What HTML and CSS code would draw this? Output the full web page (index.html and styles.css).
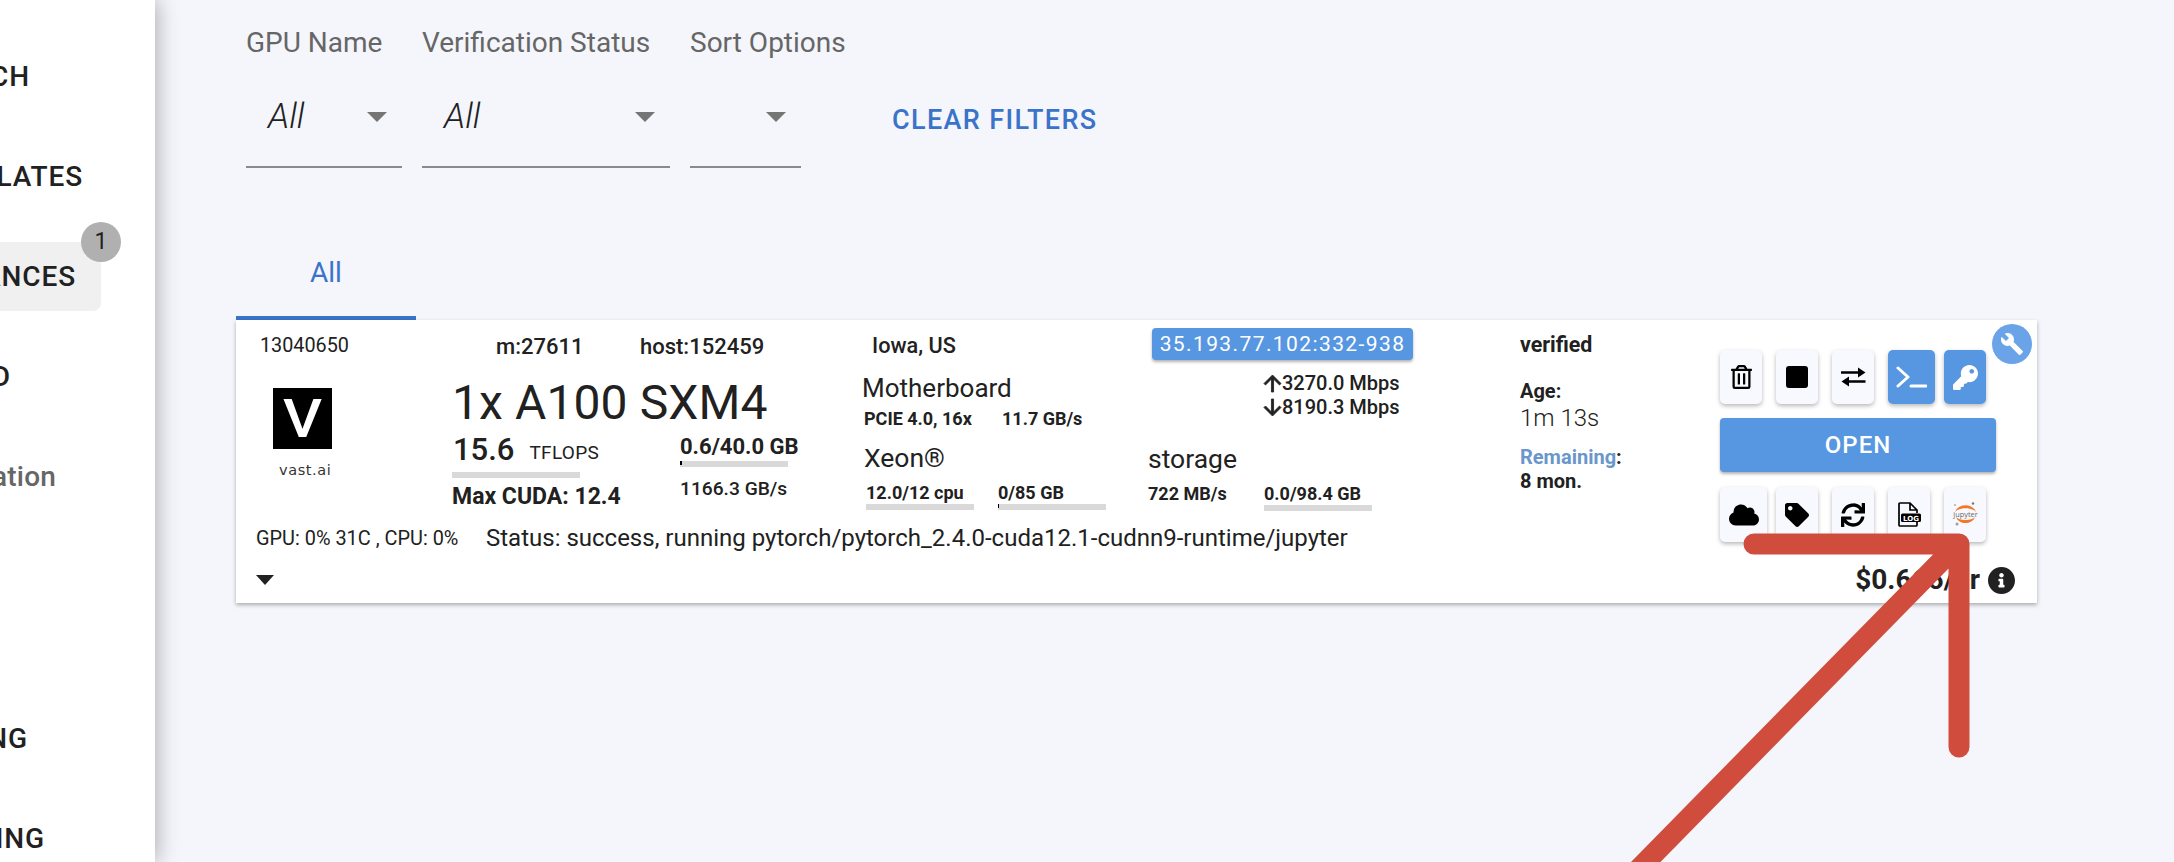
FILE: index.html
```html
<!DOCTYPE html>
<html lang="en">
<head>
<meta charset="utf-8">
<title>Instances</title>
<link rel="stylesheet" href="styles.css">
</head>
<body>
<aside class="sidebar">
  <nav class="nav">
    <div class="nav-item nav-search"><span>SEARCH</span></div>
    <div class="nav-item nav-templates"><span>TEMPLATES</span></div>
    <div class="nav-item nav-active"><span class="pill"><span>INSTANCES</span><span class="badge">1</span></span></div>
    <div class="nav-item nav-cloud"><span>CLOUD</span></div>
    <div class="nav-item nav-doc"><span>Documentation</span></div>
    <div class="nav-item nav-billing"><span>BILLING</span></div>
    <div class="nav-item nav-earning"><span>EARNING</span></div>
  </nav>
</aside>
<main class="main">
  <section class="filters">
    <div class="filter filter-gpu">
      <div class="filter-label">GPU Name</div>
      <div class="select"><span class="select-value">All</span><span class="select-caret"></span></div>
    </div>
    <div class="filter filter-status">
      <div class="filter-label">Verification Status</div>
      <div class="select"><span class="select-value">All</span><span class="select-caret"></span></div>
    </div>
    <div class="filter filter-sort">
      <div class="filter-label">Sort Options</div>
      <div class="select"><span class="select-value"></span><span class="select-caret"></span></div>
    </div>
    <div class="clear">CLEAR FILTERS</div>
  </section>
  <div class="tabs"><div class="tab">All</div></div>
  <article class="card">
    <div class="card-left">
      <div class="card-cols">
        <div class="col col-id">
          <div class="inst-id">13040650</div>
          <div class="logo"><span class="logo-v">V</span></div>
          <div class="logo-name">vast.ai</div>
        </div>
        <div class="col col-gpu">
          <div class="ids"><span class="id-m">m:27611</span><span>host:152459</span></div>
          <div class="gpu-title">1x A100 SXM4</div>
          <div class="gpu-stats">
            <div class="gpu-perf">
              <div class="perf"><span class="perf-num">15.6</span><span class="perf-unit">TFLOPS</span></div>
              <div class="meter meter-wide"></div>
              <div class="cuda">Max CUDA: 12.4</div>
            </div>
            <div class="gpu-mem">
              <div class="mem">0.6/40.0 GB</div>
              <div class="meter"><div class="meter-fill" style="width:2px"></div></div>
              <div class="mem-speed">1166.3 GB/s</div>
            </div>
          </div>
        </div>
        <div class="col col-sys">
          <div class="location">Iowa, US</div>
          <div class="part part-board">Motherboard</div>
          <div class="pcie"><span class="pcie-a">PCIE 4.0, 16x</span><span>11.7 GB/s</span></div>
          <div class="part part-cpu">Xeon®</div>
          <div class="small-row">
            <div class="small-cell small-cpu"><div class="small">12.0/12 cpu</div><div class="meter"></div></div>
            <div class="small-cell"><div class="small">0/85 GB</div><div class="meter"><div class="meter-fill" style="width:1px"></div></div></div>
          </div>
        </div>
        <div class="col col-net">
          <div class="chip">35.193.77.102:332-938</div>
          <div class="speeds">
            <div class="speed"><svg class="arrow" viewBox="4 4 16 16"><path d="M4 12l1.41 1.41L11 7.83V20h2V7.83l5.58 5.59L20 12l-8-8-8 8z"/></svg>3270.0 Mbps</div>
            <div class="speed"><svg class="arrow" viewBox="4 4 16 16"><path d="M20 12l-1.41-1.41L13 16.17V4h-2v12.17l-5.58-5.59L4 12l8 8 8-8z"/></svg>8190.3 Mbps</div>
          </div>
          <div class="part part-storage">storage</div>
          <div class="small-row">
            <div class="small-cell small-disk"><div class="small">722 MB/s</div></div>
            <div class="small-cell"><div class="small">0.0/98.4 GB</div><div class="meter"></div></div>
          </div>
        </div>
        <div class="col col-meta">
          <div class="verified">verified</div>
          <div class="meta-label meta-age">Age:</div>
          <div class="age">1m 13s</div>
          <div class="meta-label meta-rem"><span class="rem">Remaining</span>:</div>
          <div class="meta-label">8 mon.</div>
        </div>
      </div>
      <div class="status-row">
        <div class="usage">GPU: 0% 31C , CPU: 0%</div>
        <div class="status">Status: success, running pytorch/pytorch_2.4.0-cuda12.1-cudnn9-runtime/jupyter</div>
      </div>
      <div class="expand"></div>
    </div>
    <div class="actions">
      <div class="btn-row btn-row-top">
        <div class="btn"><svg class="ic-trash" viewBox="0 0 448 512"><path d="M268 416h24a12 12 0 0 0 12-12V188a12 12 0 0 0-12-12h-24a12 12 0 0 0-12 12v216a12 12 0 0 0 12 12zM432 80h-82.41l-34-56.7A48 48 0 0 0 274.41 0H173.59a48 48 0 0 0-41.16 23.3L98.41 80H16A16 16 0 0 0 0 96v16a16 16 0 0 0 16 16h16v336a48 48 0 0 0 48 48h288a48 48 0 0 0 48-48V128h16a16 16 0 0 0 16-16V96a16 16 0 0 0-16-16zM171.84 50.91A6 6 0 0 1 177 48h94a6 6 0 0 1 5.15 2.91L293.61 80H154.39zM368 464H80V128h288zm-212-48h24a12 12 0 0 0 12-12V188a12 12 0 0 0-12-12h-24a12 12 0 0 0-12 12v216a12 12 0 0 0 12 12z"/></svg></div>
        <div class="btn"><span class="ic-stop"></span></div>
        <div class="btn"><svg class="ic-swap" viewBox="0 0 25 20"><path d="M0 4.3H17V.5L24.5 5.5 17 10.5V6.8H0zM24.5 13.2H8V9.5L.5 14.5 8 19.5V15.7H24.5z"/></svg></div>
        <div class="btn btn-blue btn-wide-r"><svg class="ic-term" viewBox="0 0 31 22"><path d="M2 2l10 9-10 9" fill="none" stroke="#fff" stroke-width="3" stroke-linecap="round" stroke-linejoin="round"/><path d="M15 20h15" fill="none" stroke="#fff" stroke-width="3" stroke-linecap="round"/></svg></div>
        <div class="btn btn-blue"><svg class="ic-key" viewBox="0 0 512 512"><path d="M512 176.001C512 273.203 433.202 352 336 352c-11.22 0-22.19-1.062-32.827-3.069l-24.012 27.014A23.999 23.999 0 0 1 261.223 384H224v40c0 13.255-10.745 24-24 24h-40v40c0 13.255-10.745 24-24 24H24c-13.255 0-24-10.745-24-24v-78.059c0-6.365 2.529-12.47 7.029-16.971l161.802-161.802C163.108 213.814 160 195.271 160 176 160 78.798 238.797.001 335.999 0 433.488-.001 512 78.511 512 176.001zM336 128c0 26.51 21.49 48 48 48s48-21.49 48-48-21.49-48-48-48-48 21.49-48 48z"/></svg></div>
      </div>
      <div class="open">OPEN</div>
      <div class="btn-row btn-row-bottom">
        <div class="btn btn-wide-l"><svg class="ic-cloud" viewBox="0 0 640 512"><path d="M537.6 226.6c4.1-10.7 6.4-22.4 6.4-34.6 0-53-43-96-96-96-19.7 0-38.1 6-53.3 16.2C367 64.2 315.3 32 256 32c-88.4 0-160 71.6-160 160 0 2.7.1 5.4.2 8.1C40.2 219.8 0 273.2 0 336c0 79.5 64.5 144 144 144h368c70.7 0 128-57.3 128-128 0-61.9-44-113.6-102.4-125.4z"/></svg></div>
        <div class="btn"><svg class="ic-tag" viewBox="0 0 512 512"><path d="M0 252.118V48C0 21.49 21.49 0 48 0h204.118a48 48 0 0 1 33.941 14.059l211.882 211.882c18.745 18.745 18.745 49.137 0 67.882L293.823 497.941c-18.745 18.745-49.137 18.745-67.882 0L14.059 286.059A48 48 0 0 1 0 252.118zM112 64c-26.51 0-48 21.49-48 48s21.49 48 48 48 48-21.49 48-48-21.49-48-48-48z"/></svg></div>
        <div class="btn"><svg class="ic-sync" viewBox="0 0 512 512"><path d="M440.65 12.57l4 82.77A247.16 247.16 0 0 0 255.83 8C134.73 8 33.91 94.92 12.29 209.82A12 12 0 0 0 24.09 224h49.05a12 12 0 0 0 11.67-9.26 175.91 175.91 0 0 1 317-56.94l-101.46-4.86a12 12 0 0 0-12.57 12v47.41a12 12 0 0 0 12 12H500a12 12 0 0 0 12-12V12a12 12 0 0 0-12-12h-47.37a12 12 0 0 0-11.98 12.57zM255.83 432a175.61 175.61 0 0 1-146-77.8l101.8 4.87a12 12 0 0 0 12.57-12v-47.4a12 12 0 0 0-12-12H12a12 12 0 0 0-12 12V500a12 12 0 0 0 12 12h47.35a12 12 0 0 0 12-12.6l-4.15-82.57A247.17 247.17 0 0 0 255.83 504c121.11 0 221.93-86.92 243.55-201.82a12 12 0 0 0-11.8-14.18h-49.05a12 12 0 0 0-11.67 9.26A175.86 175.86 0 0 1 255.83 432z"/></svg></div>
        <div class="btn"><svg class="ic-log" viewBox="0 0 23 25"><path d="M19 20v3a1 1 0 0 1-1 1H2a1 1 0 0 1-1-1V2a1 1 0 0 1 1-1h10l7 7v3M12 1v7h7" fill="none" stroke="#000" stroke-width="1.7"/><rect x="3" y="11.5" width="20" height="8.5" rx="1.5"/><text class="log-text" x="13" y="18.5">LOG</text></svg></div>
        <div class="btn"><svg class="ic-jupyter" viewBox="0 0 27 25"><path d="M3 10C6 1 21 1 24 10 20 5 7 5 3 10zM4 15C7 23 20 23 23 15 20 19 7 19 4 15z" fill="#f37726"/><text class="jup-text" x="13.5" y="14.5">jupyter</text><circle cx="21" cy="1.5" r="1.2" fill="#767677"/><circle cx="3" cy="3" r=".8" fill="#767677"/><circle cx="5" cy="22" r="1.5" fill="#9e9e9e"/></svg></div>
      </div>
      <div class="price"><span>$0.666/hr</span><svg class="ic-info" viewBox="8 8 496 496"><path d="M256 8C119.043 8 8 119.083 8 256c0 136.997 111.043 248 248 248s248-111.003 248-248C504 119.083 392.957 8 256 8zm0 110c23.196 0 42 18.804 42 42s-18.804 42-42 42-42-18.804-42-42 18.804-42 42-42zm56 254c0 6.627-5.373 12-12 12h-88c-6.627 0-12-5.373-12-12v-24c0-6.627 5.373-12 12-12h12v-64h-12c-6.627 0-12-5.373-12-12v-24c0-6.627 5.373-12 12-12h64c6.627 0 12 5.373 12 12v100h12c6.627 0 12 5.373 12 12v24z"/></svg></div>
    </div>
    <div class="wrench"><svg class="ic-wrench" viewBox="0 0 24 24"><path d="M22.7 19l-9.1-9.1c.9-2.3.4-5-1.5-6.9-2-2-5-2.4-7.4-1.3L9 6 6 9 1.6 4.7C.4 7.1.9 10.1 2.9 12.1c1.9 1.9 4.6 2.4 6.9 1.5l9.1 9.1c.4.4 1 .4 1.4 0l2.3-2.3c.5-.4.5-1.1.1-1.4z"/></svg></div>
  </article>
</main>
<svg class="annotation" viewBox="0 0 2174 862"><path d="M1754 544H1959V747M1958 544L1630 878" fill="none" stroke="#d04d3d" stroke-width="21" stroke-linecap="round" stroke-linejoin="round"/></svg>
</body>
</html>
```
FILE: styles.css
```css
* { box-sizing: border-box; }
html, body { margin: 0; height: 100%; }
body {
  display: flex;
  height: 862px;
  overflow: hidden;
  position: relative;
  background: #f4f6fb;
  color: #212121;
  font-family: Roboto, "Liberation Sans", sans-serif;
}

/* Sidebar */
.sidebar {
  width: 155px;
  flex: none;
  height: 862px;
  background: #fff;
  box-shadow: 3px 0 20px rgba(0, 0, 0, .28);
  overflow: hidden;
  position: relative;
  z-index: 2;
}
.nav { padding-top: 26px; }
.nav-item {
  height: 100px;
  display: flex;
  align-items: center;
  justify-content: flex-end;
  font-size: 28px;
  font-weight: 500;
  letter-spacing: .9px;
  white-space: nowrap;
  color: #212121;
}
.nav-search { padding-right: 125px; }
.nav-templates { padding-right: 72px; }
.nav-active { padding-right: 54px; }
.nav-cloud { padding-right: 144px; }
.nav-doc { padding-right: 99px; color: #666; letter-spacing: .2px; }
.nav-billing { padding-right: 127px; margin-top: 162px; }
.nav-earning { padding-right: 110px; }
.pill {
  position: relative;
  height: 69px;
  display: flex;
  align-items: center;
  padding-right: 25px;
  background: #f0f0f0;
  border-radius: 0 8px 8px 0;
}
.badge {
  position: absolute;
  top: -20px;
  right: -20px;
  width: 40px;
  height: 40px;
  border-radius: 50%;
  background: #b0b0b0;
  display: flex;
  align-items: center;
  justify-content: center;
  font-size: 23px;
  font-weight: 400;
  letter-spacing: 0;
}

/* Main */
.main { flex: 1; padding-left: 81px; min-width: 0; }
.filters { display: flex; gap: 20px; padding-left: 10px; height: 168px; }
.filter { display: flex; flex-direction: column; padding-top: 27px; }
.filter-gpu { width: 156px; }
.filter-status { width: 248px; }
.filter-sort { width: 111px; }
.filter-label { font-size: 28px; line-height: 32px; color: #666; white-space: nowrap; }
.select {
  margin-top: 36px;
  height: 73px;
  border-bottom: 2px solid #8a8a8a;
  display: flex;
  justify-content: space-between;
  padding: 2px 15px 0 22px;
}
.select-value { font-size: 35px; font-style: italic; font-weight: 300; line-height: 40px; height: 40px; }
.select-caret {
  margin-top: 15px;
  width: 0;
  height: 0;
  border-left: 10px solid transparent;
  border-right: 10px solid transparent;
  border-top: 10px solid #757575;
}
.clear {
  margin: 104px 0 0 71px;
  font-size: 27px;
  line-height: 32px;
  height: 32px;
  font-weight: 500;
  letter-spacing: 1.35px;
  color: #3a73c9;
  white-space: nowrap;
}

.tabs { margin-top: 56px; display: flex; }
.tab {
  width: 180px;
  height: 96px;
  border-bottom: 4px solid #3a73c9;
  padding-top: 4px;
  display: flex;
  align-items: center;
  justify-content: center;
  font-size: 28px;
  color: #3a73c9;
}

/* Card */
.card {
  position: relative;
  width: 1801px;
  height: 283px;
  background: #fff;
  box-shadow: 0 2px 4px rgba(0, 0, 0, .3);
  display: flex;
}
.card-left { width: 1484px; flex: none; }
.card-cols { display: flex; height: 190px; }
.col { flex: none; }
.col-id { width: 216px; padding: 14px 0 0 24px; }
.inst-id { font-size: 19.8px; line-height: 24px; }
.logo {
  width: 59px;
  height: 61px;
  margin: 30px 0 0 13px;
  background: #000;
  color: #fff;
  display: flex;
  align-items: center;
  justify-content: center;
  font-size: 54px;
  font-weight: 500;
}
.logo-v { display: block; transform: scaleX(1.12); }
.logo-name {
  margin: 11px 0 0 19px;
  font: 14.5px/20px "DejaVu Sans", sans-serif;
  letter-spacing: .6px;
  color: #333;
}

.col-gpu { width: 411px; padding-top: 15px; }
.ids { font-size: 22px; line-height: 24px; font-weight: 500; padding-left: 44px; display: flex; }
.id-m { width: 144px; }
.gpu-title { margin-top: 19px; font-size: 48px; line-height: 50px; white-space: nowrap; letter-spacing: .1px; }
.gpu-stats { display: flex; }
.gpu-perf { width: 228px; }
.perf { margin-top: 4px; height: 36px; display: flex; align-items: center; padding-left: 1px; }
.perf-num { font-size: 31px; font-weight: 500; line-height: 36px; }
.perf-unit { font-size: 19px; margin: 6px 0 0 15px; line-height: 24px; letter-spacing: .3px; }
.meter { height: 6px; width: 108px; background: #d9d9d9; display: flex; }
.meter-fill { height: 4px; background: #000; }
.meter-wide { width: 128px; margin-top: 4px; }
.cuda { margin-top: 6px; font-size: 23px; line-height: 26px; font-weight: 700; white-space: nowrap; }
.gpu-mem { padding-top: 6px; }
.mem { font-size: 22px; line-height: 26px; font-weight: 700; white-space: nowrap; }
.gpu-mem .meter { margin-top: 1px; }
.mem-speed { margin-top: 10px; font-size: 19.2px; line-height: 24px; font-weight: 500; white-space: nowrap; }

.col-sys { width: 285px; padding-top: 14px; }
.location { font-size: 21.7px; line-height: 24px; padding-left: 9px; font-weight: 500; }
.part { font-size: 26.5px; line-height: 32px; }
.part-board { margin: 14px 0 0 -1px; font-size: 26px; }
.part-cpu { margin-top: 12px; padding-left: 1px; }
.part-storage { margin-top: 24px; }
.pcie { margin-top: 4px; padding-left: 1px; font-size: 18px; line-height: 22px; font-weight: 700; display: flex; white-space: nowrap; }
.pcie-a { width: 138px; }
.small-row { display: flex; margin-top: 8px; }
.small-cell { width: 116px; }
.small-cpu { width: 132px; margin-left: 3px; }
.small-disk { width: 116px; }
.small { font-size: 18px; line-height: 22px; font-weight: 700; white-space: nowrap; }

.col-net { width: 372px; padding-top: 8px; }
.chip {
  margin-left: 4px;
  width: 261px;
  height: 32px;
  background: #5796e1;
  color: #fff;
  border-radius: 4px;
  box-shadow: 0 2px 3px rgba(0, 0, 0, .3);
  font-size: 21px;
  line-height: 32px;
  letter-spacing: 1.4px;
  text-align: center;
  white-space: nowrap;
}
.speeds { margin: 11px 0 0 116px; }
.speed { height: 24px; display: flex; align-items: center; font-size: 20px; font-weight: 500; white-space: nowrap; }
.arrow { width: 17px; height: 17px; margin-right: 1px; fill: #212121; stroke: #212121; stroke-width: .8; overflow: visible; }

.col-meta { width: 200px; padding-top: 13px; }
.verified { font-size: 21.4px; line-height: 24px; font-weight: 700; }
.meta-label { font-size: 20px; line-height: 24px; font-weight: 700; }
.meta-age { margin-top: 22px; }
.age { font-size: 24px; line-height: 30px; font-weight: 300; }
.meta-rem { margin-top: 12px; }
.rem { color: #6a96cc; }

.status-row { display: flex; align-items: center; margin-top: 14px; height: 28px; padding-left: 20px; }
.usage { width: 230px; font-size: 19.9px; white-space: nowrap; }
.status { font-size: 24px; white-space: nowrap; }
.expand {
  margin: 23px 0 0 20px;
  width: 0;
  height: 0;
  border-left: 9px solid transparent;
  border-right: 9px solid transparent;
  border-top: 10px solid #212121;
}

/* Actions */
.actions { width: 317px; flex: none; padding: 30px 41px 0 0; }
.btn-row { display: flex; gap: 14px; }
.btn-row-top { height: 54px; }
.btn-row-bottom { height: 55px; margin-top: 15px; }
.btn {
  width: 42px;
  height: 100%;
  display: flex;
  align-items: center;
  justify-content: center;
  background: #f8f9fe;
  border-radius: 5px;
  box-shadow: 0 2px 4px rgba(0, 0, 0, .28);
  flex: none;
}
.btn svg { display: block; }
.btn-blue { background: #5796e1; }
.btn-wide-r { width: 47px; margin-right: -5px; }
.btn-wide-l { width: 47px; margin-right: -5px; }
.ic-trash { width: 21px; height: 24px; }
.ic-stop { width: 22px; height: 22px; background: #000; border-radius: 3px; }
.ic-swap { width: 25px; height: 20px; }
.ic-term { width: 31px; height: 22px; }
.ic-key { width: 25px; height: 25px; fill: #fff; }
.ic-cloud { width: 30px; height: 24px; }
.ic-tag { width: 24px; height: 24px; }
.ic-sync { width: 24px; height: 24px; }
.ic-log { width: 23px; height: 25px; }
.log-text { font: 700 7px "DejaVu Sans", sans-serif; fill: #fff; text-anchor: middle; }
.ic-jupyter { width: 27px; height: 25px; }
.jup-text { font: 7.4px "Open Sans", sans-serif; fill: #666; text-anchor: middle; }
.open {
  margin-top: 14px;
  height: 54px;
  background: #5796e1;
  color: #fff;
  border-radius: 4px;
  box-shadow: 0 2px 3px rgba(0, 0, 0, .3);
  font-size: 24px;
  font-weight: 500;
  letter-spacing: 1px;
  line-height: 55px;
  text-align: center;
}
.price {
  margin: 19px -19px 0 0;
  height: 36px;
  display: flex;
  align-items: center;
  justify-content: flex-end;
  font-size: 28px;
  font-weight: 700;
  white-space: nowrap;
}
.ic-info { width: 27px; height: 27px; margin: 2px 0 0 8px; fill: #212121; flex: none; }
.wrench {
  position: absolute;
  top: 4px;
  right: 5px;
  width: 40px;
  height: 40px;
  border-radius: 50%;
  background: #6aa3e8;
  display: flex;
  align-items: center;
  justify-content: center;
}
.ic-wrench { width: 24px; height: 24px; fill: #fff; }

.annotation {
  position: absolute;
  left: 0;
  top: 0;
  width: 2174px;
  height: 862px;
  pointer-events: none;
  z-index: 5;
}
```
